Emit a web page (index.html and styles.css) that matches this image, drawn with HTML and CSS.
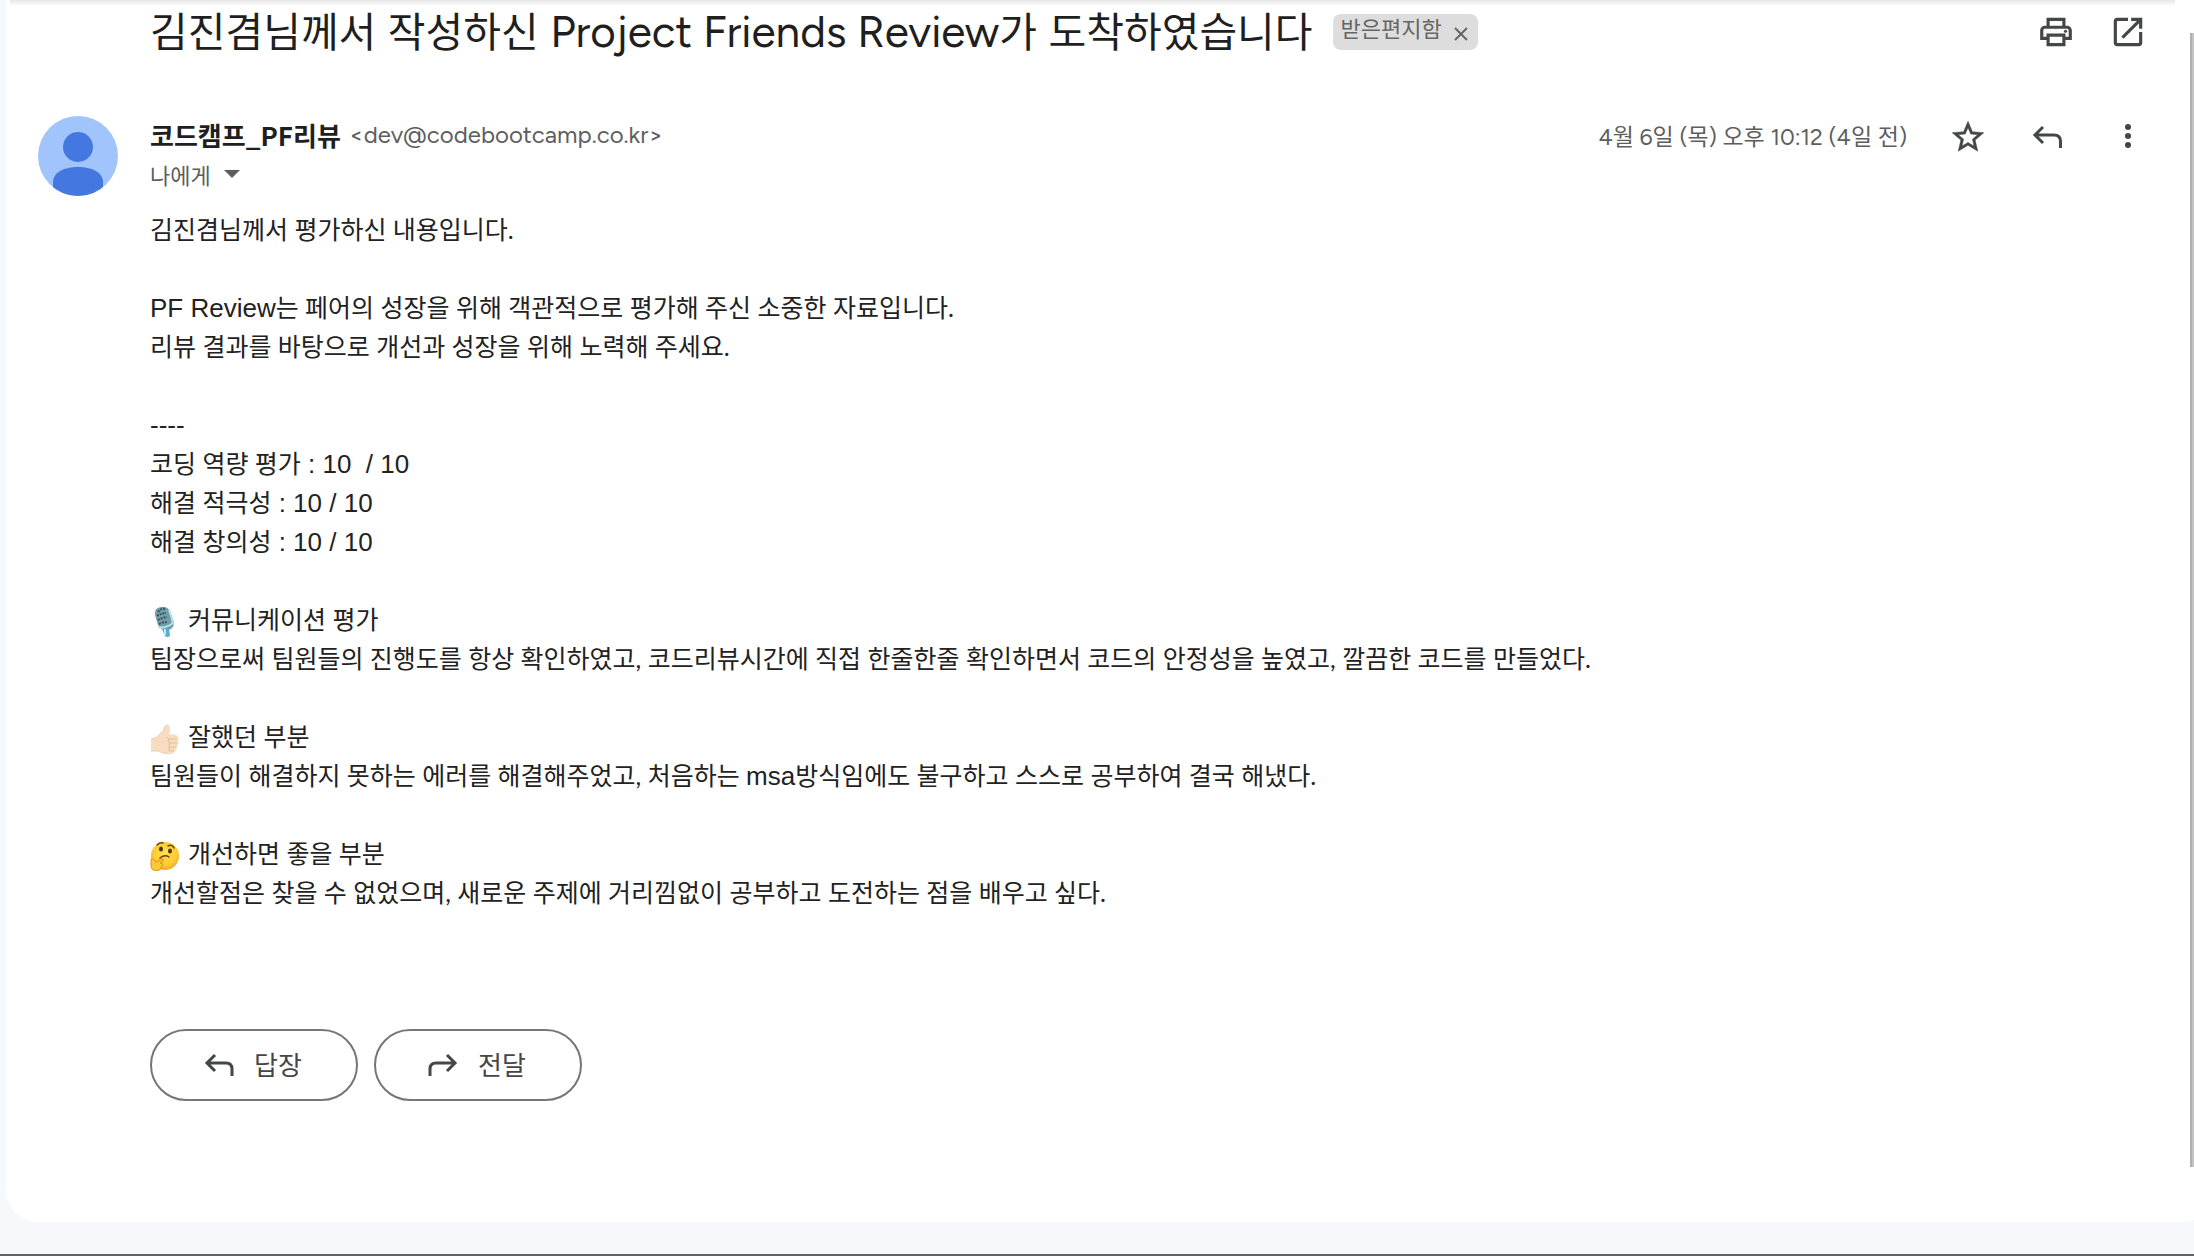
FILE: index.html
```html
<!DOCTYPE html>
<html lang="ko">
<head>
<meta charset="utf-8">
<meta name="viewport" content="width=device-width, initial-scale=1">
<title>Project Friends Review</title>
<link rel="stylesheet" href="styles.css">
</head>
<body>
<div class="page">
  <main class="card">
    <header class="subject">
      <h1 class="subject-title">김진겸님께서 작성하신 <span class="latin" lang="en">Project Friends Review</span>가 도착하였습니다</h1>
      <span class="chip"><span class="chip-label">받은편지함</span>
        <button class="chip-close" type="button" aria-label="라벨 삭제">
          <svg width="14" height="14" viewBox="0 0 14 14" fill="none" stroke="currentColor" stroke-width="2"><path d="M1 1l12 12M13 1L1 13"/></svg>
        </button>
      </span>
      <div class="subject-actions">
        <button class="icon-button" type="button" aria-label="인쇄">
          <svg width="38" height="38" viewBox="0 0 24 24" fill="currentColor"><path d="M19 8h-1V3H6v5H5c-1.660 0-3 1.340-3 3v6h4v4h12v-4h4v-6c0-1.660-1.340-3-3-3zM8 5h8v3H8V5zm8 14H8v-4h8v4zm2-4v-2H6v2H4v-4c0-.55.45-1 1-1h14c.55 0 1 .45 1 1v4h-2z"/><circle cx="18" cy="11.500" r="1"/></svg>
        </button>
        <button class="icon-button" type="button" aria-label="새 창에서 열기">
          <svg width="38" height="38" viewBox="0 0 24 24" fill="currentColor"><path d="M19 19H5V5h7V3H5c-1.110 0-2 .9-2 2v14c0 1.100.89 2 2 2h14c1.100 0 2-.9 2-2v-7h-2v7zM14 3v2h3.590l-9.830 9.830 1.410 1.410L19 6.410V10h2V3h-7z"/></svg>
        </button>
      </div>
    </header>

    <article class="message">
      <svg class="avatar" width="80" height="80" viewBox="0 0 80 80" role="img" aria-label="프로필 사진">
        <defs><clipPath id="avatar-clip"><circle cx="40" cy="40" r="40"/></clipPath></defs>
        <g clip-path="url(#avatar-clip)">
          <rect width="80" height="80" fill="#a1c4fd"/>
          <circle cx="40" cy="31" r="15" fill="#4477df"/>
          <path d="M15 80V66C15 56 27 51 40 51s25 5 25 15v14z" fill="#4477df"/>
        </g>
      </svg>
      <div class="message-main">
        <div class="message-head">
          <div class="sender">
            <div class="sender-line">
              <strong class="sender-name">코드캠프_PF리뷰</strong>
              <span class="sender-mail">&lt;dev@codebootcamp.co.kr&gt;</span>
            </div>
            <button class="recipient" type="button">나에게
              <svg width="16" height="8" viewBox="0 0 16 8" fill="currentColor"><path d="M0 0h16L8 8z"/></svg>
            </button>
          </div>
          <div class="message-meta">
            <time class="date" datetime="2023-04-06T22:12">4월 6일 (목) 오후 10:12 (4일 전)</time>
            <button class="icon-button" type="button" aria-label="별표">
              <svg width="38" height="38" viewBox="0 0 24 24" fill="currentColor"><path d="M22 9.240l-7.190-.62L12 2 9.190 8.630 2 9.240l5.460 4.730L5.820 21 12 17.270 18.180 21l-1.630-7.030L22 9.240zM12 15.400l-3.760 2.270 1-4.280-3.320-2.880 4.380-.38L12 6.100l1.710 4.040 4.380.38-3.320 2.880 1 4.280L12 15.400z" stroke="currentColor" stroke-width=".3"/></svg>
            </button>
            <button class="icon-button" type="button" aria-label="답장">
              <svg width="38" height="38" viewBox="0 0 38 38" fill="none" stroke="currentColor" stroke-width="3"><path d="M14 9l-8 8 8 8M6 17h19q6.500 0 6.500 6.500V30"/></svg>
            </button>
            <button class="icon-button" type="button" aria-label="더보기">
              <svg width="38" height="38" viewBox="0 0 38 38" fill="currentColor"><circle cx="19" cy="9" r="3"/><circle cx="19" cy="18" r="3"/><circle cx="19" cy="27" r="3"/></svg>
            </button>
          </div>
        </div>

        <div class="body">
          <p>김진겸님께서 평가하신 내용입니다.</p>
          <p><span class="latin" lang="en">PF Review</span>는 페어의 성장을 위해 객관적으로 평가해 주신 소중한 자료입니다.<br>리뷰 결과를 바탕으로 개선과 성장을 위해 노력해 주세요.</p>
          <p><span class="latin">----</span><br>코딩 역량 평가<span class="latin score"> : 10  / 10</span><br>해결 적극성<span class="latin score"> : 10 / 10</span><br>해결 창의성<span class="latin score"> : 10 / 10</span></p>
          <section>
            <h2 class="section-title">
              <svg class="emoji" viewBox="0 0 30 30" aria-hidden="true">
                <path d="M12 22l7-1 1 8q-3 2-5 0z" fill="#55aeca"/>
                <path d="M5 8Q4 1 11 0q7-1 9 5l3 7q3 9-5 11-7 1-10-5z" fill="#729eac"/>
                <path d="M8 5q3-4 7-3M7 9q5-3 9-3M8 13q4-2 9-3M9 17q4-2 8-2" stroke="#39515d" stroke-width="2" fill="none" stroke-dasharray="2 1"/>
                <path d="M19 3q3 7 4 14M8 20q7 2 15-4" stroke="#b9e1ea" stroke-width="2" fill="none"/>
                <path d="M15 22v6" stroke="#b9e6f0" stroke-width="2"/>
              </svg>
              커뮤니케이션 평가</h2>
            <p>팀장으로써 팀원들의 진행도를 항상 확인하였고, 코드리뷰시간에 직접 한줄한줄 확인하면서 코드의 안정성을 높였고, 깔끔한 코드를 만들었다.</p>
          </section>
          <section>
            <h2 class="section-title">
              <svg class="emoji" viewBox="0 0 30 30" aria-hidden="true">
                <path d="M1 15q5 0 9-5 4-3 5-8 1-3 4-1 2 3 0 9l7 1q3 1 2 4 1 2 0 4 0 3-1 4 0 3-2 4-1 3-5 3-7 0-11-3H1z" fill="#f8dcc0"/>
                <path d="M19 15h8M19 19h8M19 23h7M19 27h5M17 13q3 2 2 14" stroke="#e5bd99" fill="none"/>
                <path d="M1 15q5 0 9-5 4-3 5-8M1 27h7q5 3 12 3" stroke="#edcfb1" fill="none"/>
              </svg>
              잘했던 부분</h2>
            <p>팀원들이 해결하지 못하는 에러를 해결해주었고, 처음하는 <span class="latin" lang="en">msa</span>방식임에도 불구하고 스스로 공부하여 결국 해냈다.</p>
          </section>
          <section>
            <h2 class="section-title">
              <svg class="emoji" viewBox="0 0 30 30" aria-hidden="true">
                <defs><radialGradient id="face" cx="50%" cy="40%" r="60%"><stop offset="0" stop-color="#ffe14a"/><stop offset=".7" stop-color="#fdcc34"/><stop offset="1" stop-color="#f0a726"/></radialGradient></defs>
                <circle cx="15" cy="15" r="14" fill="url(#face)"/>
                <ellipse cx="11" cy="8" rx="2" ry="2.500" fill="#503016"/><ellipse cx="20" cy="10" rx="2" ry="2.500" fill="#503016"/>
                <path d="M7 4q3-3 6-2M18 5q4-2 6 2M10 17q5-4 9-1" stroke="#6b3f18" stroke-width="1.500" fill="none" stroke-linecap="round"/>
                <path d="M1 20q0-3 2-2l3 3 6-3q3 0 1 2l-3 2q4 0 2 3-1 4-5 5-6 0-6-6z" fill="#ffc73a" stroke="#e08a1c"/>
              </svg>
              개선하면 좋을 부분</h2>
            <p>개선할점은 찾을 수 없었으며, 새로운 주제에 거리낌없이 공부하고 도전하는 점을 배우고 싶다.</p>
          </section>
        </div>

        <div class="reply-actions">
          <button class="pill" type="button">
            <svg width="30" height="24" viewBox="0 0 30 24" fill="none" stroke="currentColor" stroke-width="3"><path d="M11 2l-8 8 8 8M3 10h19q6 0 6 6v7"/></svg>
            <span class="pill-label">답장</span>
          </button>
          <button class="pill" type="button">
            <svg width="30" height="24" viewBox="0 0 30 24" fill="none" stroke="currentColor" stroke-width="3"><path d="M19 2l8 8-8 8M27 10H8q-6 0-6 6v7"/></svg>
            <span class="pill-label">전달</span>
          </button>
        </div>
      </div>
    </article>
  </main>
  <div class="scroll-thumb" aria-hidden="true"></div>
</div>
</body>
</html>
```
FILE: styles.css
```css
* {
  box-sizing: border-box;
}

body {
  margin: 0;
  background: #f6f8fc;
  color: #202124;
  font-family: Figtree, "Noto Sans CJK KR", sans-serif;
}

h1,
h2,
p {
  margin: 0;
  font-weight: 400;
}

button {
  padding: 0;
  border: 0;
  background: none;
  color: inherit;
  font: inherit;
  cursor: pointer;
}

svg {
  display: block;
  flex: none;
}

.page {
  position: relative;
  display: flex;
  flex-direction: column;
  min-height: 100vh;
  padding: 0 0 32px 6px;
  border-bottom: 2px solid #616366;
  overflow: hidden;
}

/* The card runs on past the right edge of the window. */
.card {
  position: relative;
  flex: 1;
  margin-right: -20px;
  padding: 0 67px 0 32px;
  border-radius: 0 0 32px 32px;
  background: #fff;
}

/* Shadow cast by the toolbar above the scrolled message. */
.card::before {
  content: "";
  position: absolute;
  top: 0;
  left: 4px;
  right: 39px;
  height: 6px;
  background: linear-gradient(#e6e6e6, #fff);
}

.subject {
  display: flex;
  align-items: center;
  height: 64px;
  padding-left: 112px;
}

.subject-title {
  padding-bottom: 4px;
  font-family: "Noto Sans CJK KR", sans-serif;
  font-size: 41px;
  line-height: 60px;
  color: #1f1f1f;
}

.subject-title .latin {
  font-family: Figtree, Roboto, sans-serif;
  font-size: 44px;
}

.chip {
  display: flex;
  align-items: center;
  gap: 12px;
  height: 36px;
  margin-left: 20px;
  padding: 0 10px 0 8px;
  border-radius: 8px;
  background: #ddd;
  color: #666;
  font-size: 22px;
  line-height: 32px;
}

.chip-label {
  padding-bottom: 4px;
}

.chip-close {
  margin-top: 4px;
}

.subject-actions {
  display: flex;
  gap: 34px;
  margin-left: auto;
}

.icon-button {
  color: #444746;
}

.message {
  display: flex;
  gap: 32px;
  padding-top: 52px;
}

.message-main {
  flex: 1;
  min-width: 0;
}

.message-head {
  display: flex;
  justify-content: space-between;
  height: 94px;
  color: #5e5e5e;
}

.sender-line {
  display: flex;
  align-items: center;
  gap: 8px;
  height: 36px;
}

.sender-name {
  font-family: "Noto Sans CJK KR", sans-serif;
  font-size: 26px;
  color: #1f1f1f;
}

.sender-mail {
  font-size: 24px;
}

.recipient {
  display: flex;
  align-items: center;
  gap: 13px;
  height: 44px;
  font-size: 22px;
}

.message-meta {
  display: flex;
  align-items: center;
  gap: 42px;
  height: 42px;
}

.date {
  padding-bottom: 4px;
  font-size: 23px;
}

/* Lato first: its narrow space suits the Hangul word gaps. */
.body {
  display: flex;
  flex-direction: column;
  gap: 39px;
  color: #222;
  font-family: Lato, "Noto Sans CJK KR", sans-serif;
  font-size: 25px;
  line-height: 39px;
}

.body .latin {
  font-family: "Liberation Sans", Arial, sans-serif;
  font-size: 26px;
  line-height: 1;
}

.score {
  white-space: pre;
}

.section-title {
  display: flex;
  align-items: center;
  gap: 8px;
  font-size: 25px;
}

.emoji {
  width: 30px;
  height: 30px;
  margin-top: 4px;
}

.reply-actions {
  display: flex;
  gap: 16px;
  margin-top: 117px;
}

.pill {
  display: flex;
  align-items: center;
  justify-content: center;
  gap: 20px;
  width: 208px;
  height: 72px;
  padding-right: 2px;
  border: 2px solid #747775;
  border-radius: 36px;
  color: #444746;
  font-size: 26px;
}

.pill-label {
  padding-bottom: 4px;
}

.scroll-thumb {
  position: absolute;
  top: 33px;
  right: 0;
  bottom: 87px;
  width: 4px;
  border-left: 2px solid #b0b0b0;
  background: #c4c4c4;
}
```
